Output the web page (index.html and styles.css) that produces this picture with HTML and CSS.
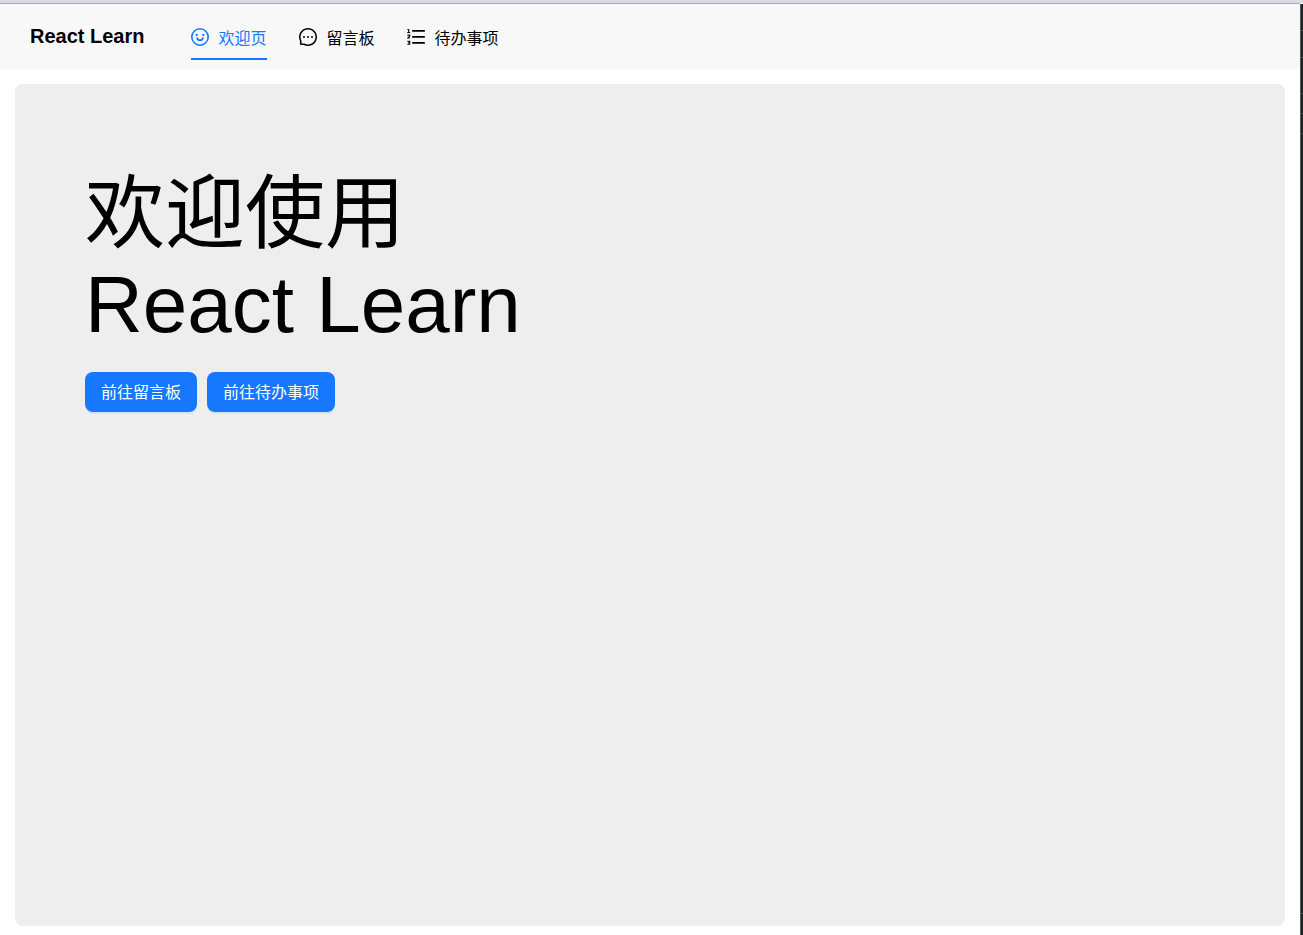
FILE: index.html
```html
<!DOCTYPE html>
<html lang="zh-CN">
<head>
<meta charset="utf-8">
<title>React Learn</title>
<link rel="stylesheet" href="styles.css">
</head>
<body>
<div class="window">
  <header class="header">
    <div class="brand">React Learn</div>
    <nav class="nav">
      <a class="nav-item active" href="#welcome" aria-current="page">
        <svg class="icon" viewBox="64 64 896 896" aria-hidden="true"><circle cx="512" cy="512" r="408" fill="none" stroke="currentColor" stroke-width="80"/><circle cx="346" cy="410" r="56"/><circle cx="678" cy="410" r="56"/><path d="M360 533c8 92 68 144 152 144s144-52 152-144" fill="none" stroke="currentColor" stroke-width="84"/></svg>
        <span>欢迎页</span>
      </a>
      <a class="nav-item" href="#messages">
        <svg class="icon" viewBox="64 64 896 896" aria-hidden="true"><path d="M464 512a48 48 0 1096 0 48 48 0 10-96 0zm200 0a48 48 0 1096 0 48 48 0 10-96 0zm-400 0a48 48 0 1096 0 48 48 0 10-96 0zm661.2-173.6c-22.6-53.7-55-101.9-96.3-143.3a444.35 444.35 0 00-143.3-96.3C630.6 75.7 572.2 64 512 64h-2c-60.6.3-119.3 12.3-174.5 35.9a445.35 445.35 0 00-142 96.5c-40.9 41.3-73 89.3-95.2 142.8-23 55.4-34.6 114.3-34.3 174.9A449.4 449.4 0 00112 714v152a46 46 0 0046 46h152.1A449.4 449.4 0 00510 960h2.1c59.9 0 118-11.6 172.7-34.3a444.48 444.48 0 00142.8-95.2c41.3-40.9 73.8-88.7 96.5-142 23.6-55.2 35.6-113.9 35.9-174.5.3-60.9-11.5-120-34.8-175.6zm-151.1 438C704 845.8 611 884 512 884h-1.7c-60.3-.3-120.2-15.3-173.1-43.5l-8.4-4.5H188V695.2l-4.5-8.4C155.3 633.9 140.3 574 140 513.7c-.4-99.7 37.7-193.3 107.6-263.8 69.8-70.5 163.1-109.5 262.8-109.9h1.7c50 0 98.5 9.7 144.2 28.9 44.6 18.7 84.6 45.6 119 80 34.3 34.3 61.3 74.4 80 119 19.4 46.2 29.1 95.2 28.9 145.8-.6 99.6-39.7 192.9-110.1 262.7z"/></svg>
        <span>留言板</span>
      </a>
      <a class="nav-item" href="#todos">
        <svg class="icon" viewBox="64 64 896 896" aria-hidden="true"><path d="M320 164h632v84H320zM320 462h632v84H320zM320 760h632v84H320z"/><path d="M84 140h64v152M76 292h144M80 420h120v56l-104 88h112M80 720h120v152H80M112 796h88" fill="none" stroke="currentColor" stroke-width="54"/></svg>
        <span>待办事项</span>
      </a>
    </nav>
  </header>
  <main class="content">
    <section class="hero">
      <h1 class="title">
        <span class="title-zh">欢迎使用</span>
        <span class="title-en">React Learn</span>
      </h1>
      <div class="actions">
        <button class="button" type="button">前往留言板</button>
        <button class="button" type="button">前往待办事项</button>
      </div>
    </section>
  </main>
</div>
<div class="edge"></div>
</body>
</html>
```
FILE: styles.css
```css
* { box-sizing: border-box; }
body {
  margin: 0;
  min-height: 100vh;
  display: flex;
  border-top: 3px solid #dadbe3;
  background: #fff;
  color: #000;
  font: 16px "Liberation Sans", "Noto Sans CJK SC", sans-serif;
}
.window {
  flex: 1;
  display: flex;
  flex-direction: column;
  border-top: 1px solid #a9abb0;
}
.edge {
  width: 3px;
  margin-top: 1px;
  border-left: 1px solid #55565a;
  background:
    linear-gradient(#50555a, #50555a) 0 26px / 100% 1px no-repeat,
    linear-gradient(#50555a, #50555a) 0 53px / 100% 1px no-repeat,
    linear-gradient(#3c4046, #3c4046) 0 89px / 100% 1px no-repeat,
    linear-gradient(#3c4046, #3c4046) 0 109px / 100% 1px no-repeat,
    linear-gradient(#3c4046, #3c4046) 0 129px / 100% 1px no-repeat,
    linear-gradient(#50555a, #50555a) 0 909px / 100% 1px no-repeat,
    #202127;
}
.header {
  height: 65px;
  padding: 0 30px;
  display: flex;
  background: #f8f8f8;
}
.brand {
  font-size: 20px;
  font-weight: 700;
  line-height: 64px;
}
.nav {
  display: flex;
  gap: 32px;
  margin-left: 46px;
}
.nav-item {
  height: 56px;
  padding-top: 12px;
  display: flex;
  align-items: center;
  gap: 10px;
  border-bottom: 2px solid transparent;
  color: #000;
  font-family: "Noto Sans CJK SC", sans-serif;
  line-height: 24px;
  text-decoration: none;
}
.nav-item.active {
  border-color: #1677ff;
  color: #1677ff;
}
.icon {
  width: 18px;
  height: 18px;
  fill: currentColor;
}
.content {
  flex: 1;
  display: flex;
  padding: 15px 15px 9px;
}
.hero {
  flex: 1;
  padding: 70px;
  border-radius: 8px;
  background: #eee;
}
.title {
  margin: 0 0 20px;
  font-size: 80px;
  font-weight: 400;
}
.title span { display: block; }
.title-zh {
  font-family: "Noto Sans CJK SC", sans-serif;
  line-height: 104px;
}
.title-en { line-height: 94px; }
.actions {
  display: flex;
  flex-wrap: wrap;
  gap: 10px;
}
.button {
  height: 40px;
  padding: 0 16px 2px;
  border: 0;
  border-radius: 8px;
  background: #1677ff;
  box-shadow: 0 2px 0 rgba(5, 145, 255, 0.1);
  color: #fff;
  font: inherit;
}
```
